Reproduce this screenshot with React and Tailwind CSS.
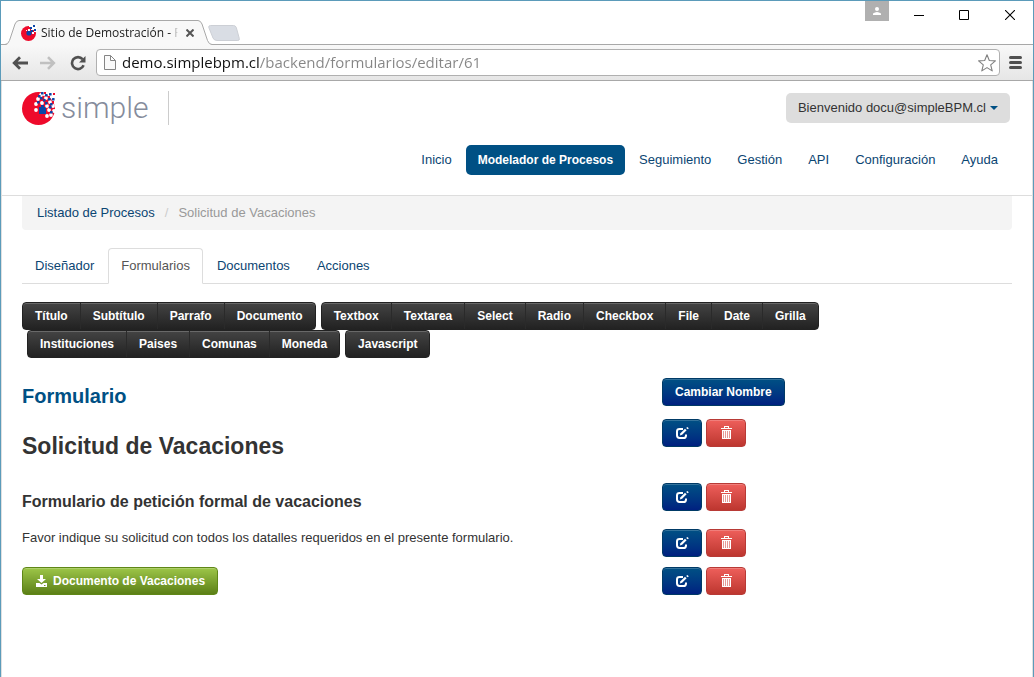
const mainNav = ["Inicio", "Modelador de Procesos", "Seguimiento", "Gestión", "API", "Configuración", "Ayuda"];
const tabs = ["Diseñador", "Formularios", "Documentos", "Acciones"];
const fieldGroups = [
  ["Título", "Subtítulo", "Parrafo", "Documento"],
  ["Textbox", "Textarea", "Select", "Radio", "Checkbox", "File", "Date", "Grilla"],
  ["Instituciones", "Paises", "Comunas", "Moneda"],
  ["Javascript"],
];

const primary =
  "border border-[#003a66] bg-linear-to-b from-[#005084] to-[#002080] text-white shadow-[inset_0_1px_0_rgba(255,255,255,0.2)]";
const danger =
  "border border-[#b83a36] bg-linear-to-b from-[#ee5f5b] to-[#bd362f] text-white shadow-[inset_0_1px_0_rgba(255,255,255,0.2)]";

function Logo({ className }) {
  const white = [
    [19, 3], [24, 6], [16, 7], [20, 11], [28, 10], [14, 12], [25, 14], [31, 14], [14, 18], [27, 18],
    [22, 2], [30, 5], [29, 23], [32, 19], [25, 24],
  ];
  const blue = [
    [17, 4], [22, 8], [27, 7], [16, 10], [24, 11], [29, 12], [28, 15],
    [24, 3], [28, 2], [31, 7], [20, 1], [29, 20], [19, 6],
  ];
  return (
    <svg viewBox="0 0 33 33" className={className} aria-hidden="true">
      <circle cx="16.5" cy="16.5" r="16.5" fill="#ee0a2b" />
      <path d="M20 0h13v13l-2-3-3-5z" fill="#fff" />
      <path d="M17 15h2v-2h3v2h2v7h-7z" fill="#0a45a8" />
      {white.map(([x, y]) => <circle key={`w${x}-${y}`} cx={x} cy={y} r="1.9" fill="#fff" />)}
      {blue.map(([x, y]) => <rect key={`b${x}-${y}`} x={x - 1} y={y - 1} width="2.6" height="2.6" rx=".6" fill="#0a45a8" />)}
      <path d="M22 0h2v2h-2zM26 4h2v2h-2zM31 1h2v2h-2zM30 9h2v2h-2z" fill="#ee0a2b" />
    </svg>
  );
}

function Favicon() {
  return (
    <svg viewBox="0 0 16 16" className="size-4 shrink-0" aria-hidden="true">
      <circle cx="7.5" cy="8.5" r="7.5" fill="#ee0a2b" />
      <path d="M8 0h8v7h-3V5h-3V2H8z" fill="#fff" />
      <circle cx="8" cy="8" r="2.6" fill="#0a45a8" />
      <path d="M9 2h2v2H9zM12 0h2v2h-2zM13 4h2v2h-2zM10 5h2v2h-2z" fill="#0a45a8" />
      <path d="M7 4h2v2H7zM11 7h2v2h-2zM5 5h1v1H5z" fill="#fff" />
    </svg>
  );
}

function EditIcon() {
  return (
    <svg viewBox="0 0 14 14" className="size-3.5" fill="none" aria-hidden="true">
      <path d="M8 3H4.6Q2 3 2 5.4v3.9Q2 12 4.6 12h3.8q2.6 0 2.6-2.6V8.500" stroke="#fff" strokeWidth="2" />
      <path d="M4.8 9.4l.7-2.2 4.5-4.5 1.6 1.6-4.5 4.5z" fill="#fff" />
      <path d="M11.200 1.900l1.100-1 1.500 1.400-1.100 1z" fill="#fff" />
    </svg>
  );
}

function TrashIcon() {
  return (
    <svg viewBox="0 0 11 14" className="h-3.5 w-[11px]" shapeRendering="crispEdges" aria-hidden="true">
      <path d="M3 0h5v2h3v1H0V2h3zM4 1v1h3V1z" fillRule="evenodd" fill="#fff" />
      <path d="M1 4h9v9H1z" fill="#fff" fillOpacity=".45" />
      <path d="M1 4h9v1H1zM1 12h9v1H1zM1 5h1v7H1zM3 5h1v7H3zM5 5h1v7H5zM7 5h1v7H7zM9 5h1v7H9z" fill="#fff" />
    </svg>
  );
}

function DownloadIcon() {
  return (
    <svg viewBox="0 0 14 14" className="size-3.5" aria-hidden="true">
      <path d="M5 1h3v4h3L6.500 9 2 5h3z" fill="#fff" />
      <path d="M1 9h3.500l2 1.500L8.500 9H12v4H1z" fill="#fff" />
      <path d="M9 11h1.500v1H9z" fill="#6e9a20" />
    </svg>
  );
}

function BrowserChrome() {
  return (
    <div className="font-['Open_Sans','Noto_Sans',sans-serif]">
      <div className="flex h-[43px] justify-between">
        <div className="flex items-end">
          <div className="relative z-10 -mb-px ml-1 flex h-[25px]">
            <svg viewBox="0 0 14 25" className="h-[25px] w-3.5" aria-hidden="true">
              <path d="M0 25q3 0 4.500-4L10 4q1.500-3.500 4-3.500V25z" fill="#f8f8f8" />
              <path d="M0 24.500q3 0 4.500-4L10 4q1.500-3.500 4-3.500" fill="none" stroke="#a8a8a8" />
            </svg>
            <div className="flex w-[179px] items-center border-t border-[#a8a8a8] bg-[#f8f8f8] pl-0.5 text-xs text-[#222]">
              <Favicon />
              <span className="ml-1 w-[138px] overflow-hidden whitespace-nowrap mask-r-from-95%">
                Sitio de Demostración - Formularios
              </span>
              <button aria-label="Cerrar pestaña" className="ml-1 flex size-4 items-center justify-center">
                <svg viewBox="0 0 8 8" className="size-2" stroke="#555" strokeWidth="2" aria-hidden="true">
                  <path d="M.5.5l7 7M7.500.5l-7 7" />
                </svg>
              </button>
            </div>
            <svg viewBox="0 0 14 25" className="h-[25px] w-3.5" aria-hidden="true">
              <path d="M0 .5q2.500 0 4 3.500l5.500 16.500q1.500 4 4.500 4V25H0z" fill="#f8f8f8" />
              <path d="M0 .5q2.500 0 4 3.500l5.500 16.500q1.500 4 4.500 4" fill="none" stroke="#a8a8a8" />
            </svg>
          </div>
          <button aria-label="Nueva pestaña" className="-ml-1 mb-[3px]">
            <svg viewBox="0 0 32 16" className="h-4 w-8" aria-hidden="true">
              <path d="M2.500.5h23q2 0 2.800 2l3 11q.5 2-1.500 2H9q-3 0-4-2.500L.8 2.500Q.3.5 2.500.5z" fill="#d9dde4" stroke="#cccfd5" />
            </svg>
          </button>
        </div>
        <div className="flex items-start">
          <button aria-label="Usuario" className="mr-1.5 flex h-5 w-6 items-center justify-center bg-[#b0b0b0]">
            <svg viewBox="0 0 8 8" className="size-2" fill="#fff" aria-hidden="true">
              <circle cx="4" cy="2" r="2" />
              <path d="M0 8V6.500Q2 5 4 5t4 1.500V8z" />
            </svg>
          </button>
          <button aria-label="Minimizar" className="flex h-7 w-[47px] items-center justify-center">
            <svg viewBox="0 0 10 10" className="size-2.5" aria-hidden="true"><path d="M0 5h10v1H0z" /></svg>
          </button>
          <button aria-label="Maximizar" className="flex h-7 w-11 items-center justify-center">
            <svg viewBox="0 0 10 10" className="size-2.5" fill="none" stroke="#000" aria-hidden="true"><path d="M.5.5h9v9h-9z" /></svg>
          </button>
          <button aria-label="Cerrar" className="flex h-7 w-[47px] items-center justify-center">
            <svg viewBox="0 0 10 10" className="size-2.5" stroke="#000" strokeWidth="1.1" aria-hidden="true"><path d="M0 0l10 10M10 0L0 10" /></svg>
          </button>
        </div>
      </div>
      <div className="flex h-[37px] items-center border-y border-[#a8a8a8] bg-linear-to-b from-[#f8f8f8] to-[#e6e6e6] px-[11px]">
        <button aria-label="Atrás">
          <svg viewBox="0 0 16 14" className="h-3.5 w-4" fill="none" stroke="#505050" strokeWidth="2.8" aria-hidden="true">
            <path d="M2.500 7H16M8 1.200L2.200 7 8 12.800" />
          </svg>
        </button>
        <button aria-label="Adelante" className="ml-3">
          <svg viewBox="0 0 16 14" className="h-3.5 w-4" fill="none" stroke="#c0c0c0" strokeWidth="2.6" aria-hidden="true">
            <path d="M0 7h13.500M8 1.200L13.800 7 8 12.800" />
          </svg>
        </button>
        <button aria-label="Recargar" className="ml-3.5">
          <svg viewBox="0 0 16 16" className="size-4" fill="none" aria-hidden="true">
            <path d="M12.600 4.200A6 6 0 1 0 13.600 10.300" stroke="#505050" strokeWidth="2.600" />
            <path d="M15.500 1v6.500H9z" fill="#505050" />
          </svg>
        </button>
        <div className="ml-2.5 flex h-[27px] min-w-0 flex-1 items-center rounded-sm border border-[#b0b0b0] bg-white pr-[3px] pl-[7px]">
          <svg viewBox="0 0 12 15" className="h-[15px] w-3 shrink-0" fill="#fafafa" stroke="#858585" aria-hidden="true">
            <path d="M.5.5h6l5 5v9H.500zM6.500.5v5h5" />
          </svg>
          <input
            aria-label="Dirección"
            defaultValue="demo.simplebpm.cl/backend/formularios/editar/61"
            className="ml-1.5 min-w-0 flex-1 bg-[linear-gradient(to_right,#111_138px,#858585_138px)] bg-clip-text pb-0.5 text-[15px] leading-5 text-transparent outline-none"
          />
          <button aria-label="Marcador">
            <svg viewBox="0 0 18 18" className="size-[18px]" fill="#fff" stroke="#808080" strokeWidth="1.100" strokeLinejoin="round" aria-hidden="true">
              <path d="M9 .8l2.300 5.700 6.100.4-4.700 3.900 1.500 6.100L9 13.600l-5.200 3.300 1.500-6.100L.6 6.900l6.100-.4z" />
            </svg>
          </button>
        </div>
        <button aria-label="Menú" className="ml-[9px] flex w-[13px] flex-col gap-0.5">
          <span className="h-[3px] rounded-full bg-[#505050]" />
          <span className="h-[3px] rounded-full bg-[#505050]" />
          <span className="h-[3px] rounded-full bg-[#505050]" />
        </button>
      </div>
    </div>
  );
}

function Header() {
  return (
    <header className="border-b border-[#ddd] pt-2.5 pr-[22px] pb-5 pl-5">
      <div className="flex items-start justify-between">
        <a href="#inicio" className="flex h-[34px] items-center border-r border-[#ccc] pr-5 text-[#858c9c]">
          <Logo className="size-[33px]" />
          <span className="ml-1.5 font-['Roboto',sans-serif] text-[30px] leading-8 font-light">simple</span>
        </a>
        <button className="mt-0.5 flex items-center gap-1 rounded-[5px] bg-[#ddd] px-3 py-1.5">
          Bienvenido docu@simpleBPM.cl
          <svg viewBox="0 0 8 4" className="h-1 w-2" aria-hidden="true"><path d="M0 0h8L4 4z" fill="#005084" /></svg>
        </button>
      </div>
      <nav className="mt-5 flex justify-end gap-0.5">
        {mainNav.map((item, i) => (
          <a
            key={item}
            href="#nav"
            className={`rounded-[5px] px-3 py-1.5 ${i === 1 ? "bg-[#005084] text-xs leading-[18px] font-bold text-white" : "text-[#0b4572]"}`}
          >
            {item}
          </a>
        ))}
      </nav>
    </header>
  );
}

function Actions() {
  return (
    <div className="flex items-start gap-1">
      <button aria-label="Editar" className={`flex h-7 w-10 items-center justify-center rounded-sm ${primary}`}><EditIcon /></button>
      <button aria-label="Eliminar" className={`flex h-7 w-10 items-center justify-center rounded-sm ${danger}`}><TrashIcon /></button>
    </div>
  );
}

export default function App() {
  return (
    <div className="flex min-h-screen flex-col border-x border-t border-[#5b9bba] bg-white">
      <BrowserChrome />
      <div className="flex-1 border-x border-[#e0e0e0] font-['Liberation_Sans',Arial,sans-serif] text-[13px] leading-[18px] text-[#333]">
        <Header />
        <main className="px-5">
          <nav aria-label="Ruta" className="flex rounded-b-sm bg-[#f4f4f4] px-[15px] py-2">
            <a href="#procesos" className="text-[#0b4572]">Listado de Procesos</a>
            <span className="px-2.5 text-[#ccc]">/</span>
            <span className="text-[#999]">Solicitud de Vacaciones</span>
          </nav>
          <nav aria-label="Secciones" className="mt-[18px] flex gap-px border-b border-[#ddd]">
            {tabs.map((tab, i) => (
              <a
                key={tab}
                href="#seccion"
                className={`-mb-px rounded-t-sm border px-3 py-2 ${
                  i === 1 ? "border-[#ddd] border-b-white bg-white text-[#555]" : "border-transparent text-[#0b4572]"
                }`}
              >
                {tab}
              </a>
            ))}
          </nav>
          <div className="mt-[18px] flex flex-wrap">
            {fieldGroups.map((group, i) => (
              <div
                key={group[0]}
                className={`flex overflow-hidden rounded-sm border border-[#222] bg-linear-to-b from-[#444] to-[#222] shadow-[inset_0_1px_0_rgba(255,255,255,0.2)] ${i > 0 ? "ml-[5px]" : ""}`}
              >
                {group.map((label) => (
                  <button key={label} className="border-r border-[#2a2a2a] px-3 py-1 text-xs leading-[18px] font-bold text-white last:border-r-0">
                    {label}
                  </button>
                ))}
              </div>
            ))}
          </div>
          <div className="mt-5 grid grid-cols-[64fr_35fr]">
            <h2 className="text-xl leading-9 font-bold text-[#005084]">Formulario</h2>
            <div className="h-[41px]">
              <button className={`rounded-sm px-3 py-1 text-xs leading-[18px] font-bold ${primary}`}>Cambiar Nombre</button>
            </div>
            <h3 className="h-16 pt-2 text-[23px] leading-[38px] font-bold">Solicitud de Vacaciones</h3>
            <Actions />
            <h4 className="h-[46px] text-base leading-[38px] font-bold">Formulario de petición formal de vacaciones</h4>
            <Actions />
            <p className="h-[38px]">Favor indique su solicitud con todos los datalles requeridos en el presente formulario.</p>
            <Actions />
            <div>
              <button className="flex items-center gap-1 rounded-sm border border-[#5f8717] bg-linear-to-b from-[#9dc648] to-[#5c8016] px-3 py-1 text-xs leading-[18px] font-bold text-white shadow-[inset_0_1px_0_rgba(255,255,255,0.2)]">
                <DownloadIcon />
                Documento de Vacaciones
              </button>
            </div>
            <Actions />
          </div>
        </main>
      </div>
    </div>
  );
}
